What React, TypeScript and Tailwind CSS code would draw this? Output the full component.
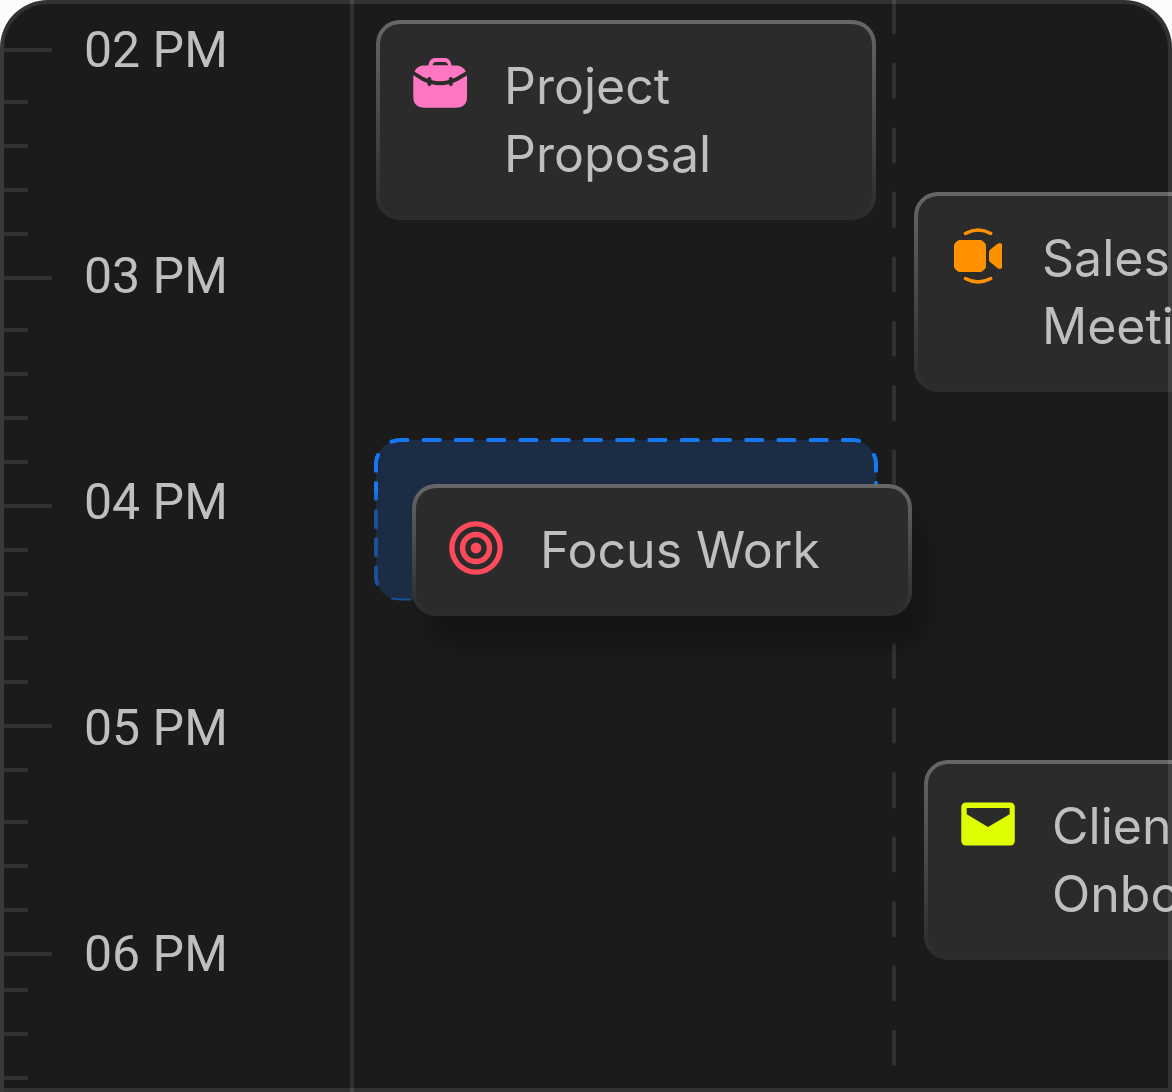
import type { ReactNode } from "react";

const TICKS: { long?: boolean; gap: string }[] = [
  { long: true, gap: "mt-12" },
  { gap: "mt-12" },
  { gap: "mt-10" },
  { gap: "mt-10" },
  { gap: "mt-10" },
  { long: true, gap: "mt-10" },
  { gap: "mt-12" },
  { gap: "mt-10" },
  { gap: "mt-10" },
  { gap: "mt-10" },
  { long: true, gap: "mt-10" },
  { gap: "mt-10" },
  { gap: "mt-10" },
  { gap: "mt-10" },
  { gap: "mt-10" },
  { long: true, gap: "mt-10" },
  { gap: "mt-10" },
  { gap: "mt-12" },
  { gap: "mt-10" },
  { gap: "mt-10" },
  { long: true, gap: "mt-10" },
  { gap: "mt-8" },
  { gap: "mt-10" },
  { gap: "mt-10" },
];

const HOURS = [
  { label: "02 PM", value: "14:00" },
  { label: "03 PM", value: "15:00" },
  { label: "04 PM", value: "16:00" },
  { label: "05 PM", value: "17:00" },
  { label: "06 PM", value: "18:00" },
];

function BriefcaseIcon() {
  return (
    <svg viewBox="0 0 64 64" className="size-16 shrink-0" fill="none" aria-hidden="true">
      <path
        d="M17 13.500H20.300C21 9 23.500 6 27 6H37C40.500 6 43 9 43.700 13.500H47C52 13.500 56 15.500 57.500 19L59 23V45C59 52 55 55.800 48 55.800H16.500C9.500 55.800 5.300 52 5.300 45V23L6.800 19C8.500 15.500 12 13.500 17 13.500Z"
        fill="#ff76c1"
      />
      <path d="M24.500 13.200C24.800 11.500 26 10 28 10H36.500C38.500 10 39.700 11.500 40.200 13.200Z" fill="#2b2b2b" />
      <path d="M4.500 20.500L15 27C26 32.500 38 32.500 49 27L60 20.500" stroke="#2b2b2b" strokeWidth="3.800" />
      <path d="M21.400 27V32M42.800 27V32" stroke="#2b2b2b" strokeWidth="4" strokeLinecap="round" />
    </svg>
  );
}

function VideoIcon() {
  return (
    <svg viewBox="0 0 64 64" className="size-16 shrink-0" fill="#ff9000" aria-hidden="true">
      <path d="M13.500 16H34.500L36.500 16.700L39.300 19.500L40 21.500V42.500L39.300 44.500L36.500 47.300L34.500 48H13.500L11.500 47.300L8.700 44.500L8 42.500V21.500L8.700 19.500L11.500 16.700Z" />
      <path d="M43 27.500L44 25.800L51.500 19.800L54 19L56 20V44L54 45L52 44.500L44 38L43 36.500Z" />
      <path
        d="M19.500 9.500A26 26 0 0 1 44.700 9.500M19.500 54.500A26 26 0 0 0 44.700 54.500"
        fill="none"
        stroke="#ff9000"
        strokeWidth="3.500"
        strokeLinecap="round"
      />
    </svg>
  );
}

function TargetIcon() {
  return (
    <svg viewBox="0 0 64 64" className="size-16 shrink-0" fill="none" stroke="#ff4a5c" strokeWidth="5.400" aria-hidden="true">
      <circle cx="32" cy="32" r="24.100" />
      <circle cx="32" cy="32" r="13.500" />
      <circle cx="32" cy="32" r="5.400" fill="#ff4a5c" stroke="none" />
    </svg>
  );
}

function MailIcon() {
  return (
    <svg viewBox="0 0 64 64" className="size-16 shrink-0" aria-hidden="true">
      <rect x="5.300" y="10.500" width="53.500" height="43" rx="4.500" fill="#dfff00" />
      <path d="M10.700 16H53.600V22.300L32 35L10.700 22.300Z" fill="#2b2b2b" />
    </svg>
  );
}

function EventCard({ icon, lines, className = "" }: { icon: ReactNode; lines: string[]; className?: string }) {
  return (
    <article className={`rounded-3xl bg-linear-to-b from-[#676767] to-[#2b2b2b] p-1 ${className}`}>
      <div className="flex gap-8 rounded-[20px] bg-[#2b2b2b] p-7">
        {icon}
        <h2 className="text-[50px] leading-[68px] whitespace-nowrap">
          {lines.map((line) => (
            <span key={line} className="block">
              {line}
            </span>
          ))}
        </h2>
      </div>
    </article>
  );
}

function DropTarget({ children }: { children: ReactNode }) {
  return (
    <div className="relative mt-[220px] h-40 rounded-3xl bg-[#1c2c44]">
      <svg
        viewBox="0 0 500 160"
        preserveAspectRatio="none"
        className="size-full overflow-visible"
        fill="none"
        strokeWidth="4"
        strokeLinecap="round"
        aria-hidden="true"
      >
        <defs>
          <linearGradient id="drop-edge" gradientUnits="userSpaceOnUse" x1="0" y1="0" x2="0" y2="160">
            <stop offset="0.320" stopColor="#1877f2" />
            <stop offset="0.420" stopColor="#1b519b" />
            <stop offset="1" stopColor="#1b4f98" />
          </linearGradient>
        </defs>
        <path d="M15.500 1.700Q20 0 24 0H476Q482 0 485.500 2" stroke="#1877f2" strokeDasharray="16.200 16.050" />
        <path
          d="M2 15Q0 19 0 23V137Q0 142 2 145M498 15Q500 19 500 23V60"
          stroke="url(#drop-edge)"
          strokeDasharray="16 12.200"
        />
        <path d="M16 158.500Q20 159.500 34 159.500" stroke="#1b4f98" strokeWidth="2" />
      </svg>
      {children}
    </div>
  );
}

export default function App() {
  return (
    <div className="min-h-screen bg-[#fcfcfc]">
      <main className="relative flex min-h-screen overflow-hidden rounded-t-[48px] bg-[#1b1b1b] font-['Inter',sans-serif] text-[#bfbfbf]">
        <section aria-label="Time" className="flex w-[354px] shrink-0 border-r-4 border-[#313131]">
          <div className="w-1 shrink-0 bg-white/4" />
          <div className="flex w-12 shrink-0 flex-col items-start" aria-hidden="true">
            {TICKS.map((tick, i) => (
              <div key={i} className={`h-1 bg-[#313131] ${tick.gap} ${tick.long ? "w-12" : "w-6"}`} />
            ))}
          </div>
          <div className="flex flex-col gap-[158px] pt-4 pl-8 font-['Roboto',sans-serif] text-[50px] leading-[68px] whitespace-nowrap">
            {HOURS.map((hour) => (
              <time key={hour.value} dateTime={hour.value}>
                {hour.label}
              </time>
            ))}
          </div>
        </section>

        <section aria-label="First day" className="relative z-10 min-w-0 flex-1 pt-5 pr-4 pl-[22px]">
          <EventCard icon={<BriefcaseIcon />} lines={["Project", "Proposal"]} />
          <DropTarget>
            <EventCard
              icon={<TargetIcon />}
              lines={["Focus Work"]}
              className="absolute top-11 left-9 w-full shadow-[16px_32px_16px_rgba(0,0,0,0.2)]"
            />
          </DropTarget>
        </section>

        <div className="relative w-1 shrink-0">
          <svg className="absolute inset-0 h-full w-1" aria-hidden="true">
            <line
              x1="2"
              y1="0"
              x2="2"
              y2="100%"
              stroke="#313131"
              strokeWidth="4"
              strokeLinecap="round"
              strokeDasharray="32.270 32.200"
              strokeDashoffset="-0.300"
            />
          </svg>
        </div>

        <section aria-label="Second day" className="w-[276px] shrink-0 overflow-hidden pt-48">
          <EventCard icon={<VideoIcon />} lines={["Sales", "Meeting"]} className="ml-[18px] w-[500px]" />
          <EventCard icon={<MailIcon />} lines={["Client", "Onboarding"]} className="mt-[368px] ml-7 w-[500px]" />
        </section>

        <div className="pointer-events-none absolute inset-0 rounded-t-[48px] border-4 border-white/10" />
      </main>
    </div>
  );
}
